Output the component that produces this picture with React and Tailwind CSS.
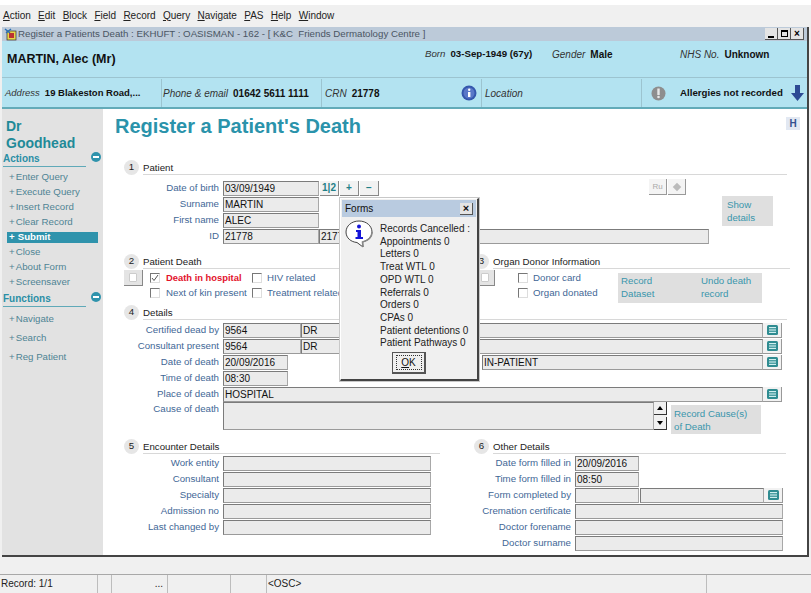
const F = "font-['Liberation_Sans',Arial,sans-serif]";
const menu = ["Action", "Edit", "Block", "Field", "Record", "Query", "Navigate", "PAS", "Help", "Window"];

function Menu() {
  return (
    <div className="h-[22px] pb-[2px] flex items-center pl-[3px] gap-[7.3px] text-[10px] text-[#222]">
      {menu.map((m) => (
        <span key={m}><span className="underline">{m[0]}</span>{m.slice(1)}</span>
      ))}
    </div>
  );
}

function WinBtn({ children }) {
  return (
    <span className="w-[13px] h-[12px] bg-[#e4e4e4] border-r border-b border-[#555] border-t-white border-l-white flex items-center justify-center text-[10px] leading-none text-black font-bold">
      {children}
    </span>
  );
}

function AppIcon() {
  return (
    <svg width="13" height="13" viewBox="0 0 13 13" className="mr-[1px] shrink-0">
      <rect x="3" y="3" width="9" height="9" fill="#e8d44a" stroke="#333" strokeWidth="0.7" />
      <rect x="5" y="5" width="5" height="5" fill="#b33" />
      <path d="M1 1 L6 5 M2 5 L7 1" stroke="#2a6fb5" strokeWidth="1.4" />
    </svg>
  );
}

function Title() {
  return (
    <div className="h-[14px] bg-[#bccad9] flex items-center pl-[2px] pr-[3px] text-[9.7px] text-[#4a5563]">
      <AppIcon />
      <span className="flex-1 whitespace-pre">Register a Patients Death : EKHUFT : OASISMAN - 162 - [ K&amp;C  Friends Dermatology Centre ]</span>
      <span className="flex">
        <WinBtn><span className="mt-[6px] block w-[6px] h-[2px] bg-black" /></WinBtn>
        <WinBtn><span className="block w-[7px] h-[7px] border border-black border-t-2" /></WinBtn>
        <WinBtn>×</WinBtn>
      </span>
    </div>
  );
}

function L({ children }) { return <i className="text-[#333] mr-[5px]">{children}</i>; }
function B({ children }) { return <b className="text-[#111]">{children}</b>; }

function InfoCircle() {
  return (
    <svg width="16" height="16" viewBox="0 0 16 16">
      <circle cx="8" cy="8" r="7.5" fill="#3557ad" />
      <circle cx="8" cy="8" r="5.5" fill="#5a78c8" />
      <rect x="7" y="7" width="2.4" height="5" fill="#fff" />
      <circle cx="8.2" cy="4.8" r="1.2" fill="#fff" />
    </svg>
  );
}
function Warn() {
  return (
    <svg width="15" height="15" viewBox="0 0 15 15">
      <circle cx="7.5" cy="7.5" r="7" fill="#8e8e8e" />
      <rect x="6.3" y="2.5" width="2.4" height="6.5" fill="#e8e8e8" />
      <circle cx="7.5" cy="11" r="1.3" fill="#e8e8e8" />
    </svg>
  );
}
function Arrow() {
  return (
    <svg width="13" height="16" viewBox="0 0 13 16">
      <path d="M4 0 H9 V8 H13 L6.5 16 L0 8 H4 Z" fill="#2d4a94" />
    </svg>
  );
}

function Header() {
  return (
    <div className="bg-[#b3e3f1] text-[10px]">
      <div className="h-[37px] flex border-b border-[#9cc4d0]">
        <div className="w-[423px] pl-[5px] pt-[10px] text-[12.5px] leading-[16px] font-bold text-[#111]">MARTIN, Alec (Mr)</div>
        <div className="w-[127px] pt-[6px] text-[9.7px]"><L>Born</L><B>03-Sep-1949 (67y)</B></div>
        <div className="w-[128px] pt-[6px]"><L>Gender</L><B>Male</B></div>
        <div className="pt-[6px]"><L>NHS No.</L><B>Unknown</B></div>
      </div>
      <div className="h-[31px] pt-[1px] flex items-center border-b-2 border-[#63abb9]">
        <div className="w-[160px] h-full pl-[3px] flex items-center border-r border-[#9cc4d0] text-[9.5px]"><L>Address</L><B>19 Blakeston Road,...</B></div>
        <div className="w-[160px] h-full pl-[1px] flex items-center border-r border-[#9cc4d0]"><L>Phone &amp; email</L><B>01642 5611 1111</B></div>
        <div className="w-[160px] h-full pl-[3px] pr-[4px] flex items-center justify-between border-r border-[#9cc4d0]">
          <span><L>CRN</L><B>21778</B></span>
          <InfoCircle />
        </div>
        <div className="w-[160px] h-full pl-[3px] flex items-center border-r border-[#9cc4d0]"><i className="text-[#333]">Location</i></div>
        <div className="flex-1 h-full flex items-center pl-[9px]">
          <Warn />
          <b className="ml-[14px] text-[9.7px] text-[#111] whitespace-nowrap">Allergies not recorded</b>
          <span className="ml-[8px] flex"><Arrow /></span>
        </div>
      </div>
    </div>
  );
}

function Minus() {
  return (
    <span className="w-[10px] h-[10px] rounded-full bg-[#2f93ac] flex items-center justify-center">
      <span className="w-[6px] h-[2px] bg-white" />
    </span>
  );
}

function SideHead({ children }) {
  return (
    <div className="flex items-start h-[15px]">
      <div className="w-[83px] h-[14px] border-b border-[#5fa9b8] text-[10px] leading-[12px] font-bold text-[#2a8fa6]">{children}</div>
      <span className="ml-[5px] -mt-[1px]"><Minus /></span>
    </div>
  );
}

function Item({ label, sel, h }) {
  return (
    <div className={`${h} flex items-center text-[9.7px]`}>
      {sel ? (
        <div className="ml-[4px] w-[91px] h-[11px] bg-[#2f93ac] flex items-center pl-[2px] text-white font-bold">
          <span className="mr-[3px]">+</span>{label}
        </div>
      ) : (
        <div className="pl-[6px] text-[#4f8494]"><span className="mr-[1px]">+</span>{label}</div>
      )}
    </div>
  );
}

function Sidebar() {
  const actions = ["Enter Query", "Execute Query", "Insert Record", "Clear Record", "Submit", "Close", "About Form", "Screensaver"];
  return (
    <div className="w-[101px] bg-[#e2e2e2] pl-[1px] pt-[9px] shrink-0">
      <div className="pl-[3px] text-[14px] leading-[17px] font-bold text-[#1f8a98] h-[35px]">Dr<br />Goodhead</div>
      <SideHead>Actions</SideHead>
      <div className="mt-[2px]">
        {actions.map((a) => <Item key={a} label={a} sel={a === "Submit"} h="h-[15px]" />)}
      </div>
      <div className="mt-[3px]"><SideHead>Functions</SideHead></div>
      <div className="mt-[2px]">
        {["Navigate", "Search", "Reg Patient"].map((a) => <Item key={a} label={a} h="h-[19px]" />)}
      </div>
    </div>
  );
}

function SecHead({ n, title, w, cls = "" }) {
  return (
    <div className={`flex h-[15px] text-[9.7px] ${cls}`}>
      <span className="w-[15px] h-[15px] rounded-full bg-[#e6e6e6] flex items-center justify-center text-[#222] shrink-0">{n}</span>
      <span className={`ml-[4px] ${w} border-b border-[#d8d8d8] text-[#222] leading-[15px]`}>{title}</span>
    </div>
  );
}

function Field({ w, children, cls = "" }) {
  return (
    <div className={`${w} ${cls} h-[15px] shrink-0 bg-[#ebebeb] border border-[#7b7b7b] border-r-[#a8a8a8] border-b-[#9a9a9a] text-[10px] leading-[13px] pl-[1px] text-[#111] whitespace-nowrap overflow-hidden`}>
      {children}
    </div>
  );
}

function Lbl({ w = "w-[119px]", children }) {
  return <div className={`${w} shrink-0 pr-[4px] text-right text-[9.7px] text-[#3f6796] whitespace-nowrap`}>{children}</div>;
}

function Row({ children, label, lw }) {
  return (
    <div className="h-[16px] flex items-center">
      <Lbl w={lw}>{label}</Lbl>
      {children}
    </div>
  );
}

function ListBtn() {
  return (
    <div className="w-[19px] h-[15px] shrink-0 bg-[#f2f2f2] border-r border-b border-[#999] flex items-center justify-center">
      <svg width="11" height="10" viewBox="0 0 11 10">
        <rect width="11" height="10" rx="1.5" fill="#2f8c91" />
        <rect x="2" y="2" width="7" height="1.2" fill="#cfeeee" />
        <rect x="2" y="4.4" width="7" height="1.2" fill="#cfeeee" />
        <rect x="2" y="6.8" width="7" height="1.2" fill="#cfeeee" />
      </svg>
    </div>
  );
}

function SmallBtn({ children, w = "w-[19px]" }) {
  return (
    <div className={`${w} h-[15px] bg-[#f2f2f2] border-r border-b border-[#888] flex items-center justify-center text-[10px] font-bold text-[#1f7f88]`}>
      {children}
    </div>
  );
}

function Check({ on }) {
  return (
    <span className="w-[10px] h-[10px] shrink-0 border border-t-[#777] border-l-[#777] border-r-[#ddd] border-b-[#ddd] flex items-center justify-center">
      {on && (
        <svg width="8" height="8" viewBox="0 0 8 8"><path d="M1 4 L3 6.5 L7 1" stroke="#555" strokeWidth="1" fill="none" /></svg>
      )}
    </span>
  );
}

function Square({ cls = "" }) {
  return (
    <div className={`w-[19px] h-[16px] bg-[#e4e4e4] border-r border-b border-[#888] flex items-center justify-center shrink-0 ${cls}`}>
      <span className="w-[8px] h-[9px] bg-white border border-[#ccc] rounded-[1px]" />
    </div>
  );
}

function CB({ on, children, cls = "text-[#3f6796] text-[9.7px]", w, gap = "ml-[6px]" }) {
  return (
    <div className={`flex items-center ${w}`}>
      <Check on={on} />
      <span className={`${gap} whitespace-nowrap ${cls}`}>{children}</span>
    </div>
  );
}

function LinkBox({ children, w, cls = "" }) {
  return <div className={`${w} ${cls} bg-[#dfdfdf] text-[9.7px] leading-[13px] text-[#3a96ac]`}>{children}</div>;
}

function Scroll() {
  return (
    <div className="w-[13px] h-[28px] shrink-0 flex flex-col justify-between bg-[#f0f0f0]">
      {["M1 5 L4 1 L7 5 Z", "M1 1 L4 5 L7 1 Z"].map((d) => (
        <span key={d} className="h-[13px] bg-[#f0f0f0] border-r border-b border-[#333] flex items-center justify-center">
          <svg width="8" height="6" viewBox="0 0 8 6"><path d={d} fill="#000" /></svg>
        </span>
      ))}
    </div>
  );
}

function Form() {
  return (
    <div className="flex-1 bg-white pl-[1px] relative">
      <div className="h-[51px] flex items-start justify-between pr-[7px]">
        <h1 className="ml-[11px] mt-[6px] text-[20px] leading-[23px] font-bold text-[#2a93ab]">Register a Patient's Death</h1>
        <span className="mt-[8px] w-[14px] h-[13px] bg-[#e2e8f2] flex items-center justify-center text-[10px] font-bold text-[#33508f]">H</span>
      </div>

      <SecHead n="1" title="Patient" w="w-[644px]" cls="ml-[20px]" />
      <div className="mt-[5px] flex">
        <div className="w-[525px]">
          <Row label="Date of birth">
            <Field w="w-[96px]">03/09/1949</Field>
            <div className="ml-[1px] flex gap-[1px]">
              <SmallBtn>1|2</SmallBtn><SmallBtn>+</SmallBtn><SmallBtn>−</SmallBtn>
            </div>
          </Row>
          <Row label="Surname"><Field w="w-[96px]">MARTIN</Field></Row>
          <Row label="First name"><Field w="w-[96px]">ALEC</Field></Row>
        </div>
        <div className="w-[126px] ml-[20px] -mt-[1px]">
          <div className="flex gap-[1px]">
            <div className="w-[18px] h-[16px] bg-[#f4f4f4] border-r border-b border-[#999] text-[8px] text-[#aaa] flex items-center justify-center">Ru</div>
            <div className="w-[18px] h-[16px] bg-[#f4f4f4] border-r border-b border-[#999] flex items-center justify-center">
              <span className="w-[6px] h-[6px] rotate-45 bg-[#bbb]" />
            </div>
          </div>
          <LinkBox w="w-[51px]" cls="ml-[73px] mt-[1px] h-[30px] pl-[5px] pt-[2px]">Show<br />details</LinkBox>
        </div>
      </div>
      <Row label="ID">
        <Field w="w-[96px]">21778</Field>
        <Field w="w-[390px]">21778</Field>
      </Row>

      <div className="mt-[10px] flex">
        <div className="w-[347px] ml-[20px]">
          <SecHead n="2" title="Patient Death" w="w-[327px]" />
          <div className="mt-[1px] flex">
            <Square />
            <div className="ml-[7px]">
              <div className="h-[16px] flex items-center">
                <CB on w="w-[102px]" cls="text-[#e3122b] font-bold text-[9.4px]">Death in hospital</CB>
                <CB gap="ml-[5px]">HIV related</CB>
              </div>
              <div className="h-[15px] flex items-center">
                <CB w="w-[102px]">Next of kin present</CB>
                <CB gap="ml-[5px]">Treatment related</CB>
              </div>
            </div>
          </div>
        </div>
        <div className="flex-1">
          <SecHead n="3" title="Organ Donor Information" w="w-[297px]" cls="ml-[3px]" />
          <div className="mt-[1px] flex">
            <Square cls="ml-[5px]" />
            <div className="ml-[23px] w-[100px]">
              <div className="h-[16px] flex items-center"><CB gap="ml-[5px]">Donor card</CB></div>
              <div className="h-[15px] flex items-center"><CB gap="ml-[5px]">Organ donated</CB></div>
            </div>
            <LinkBox w="w-[144px]" cls="mt-[3px] h-[30px] flex pt-[1px] pl-[3px]">
              <span className="w-[80px]">Record<br />Dataset</span>
              <span>Undo death<br />record</span>
            </LinkBox>
          </div>
        </div>
      </div>

      <div className="mt-[2px] ml-[20px]">
        <SecHead n="4" title="Details" w="w-[644px]" />
      </div>
      <div className="mt-[2px]">
        <Row label="Certified dead by">
          <Field w="w-[78px]">9564</Field><Field w="w-[462px]">DR</Field><ListBtn />
        </Row>
        <Row label="Consultant present">
          <Field w="w-[78px]">9564</Field><Field w="w-[462px]">DR</Field><ListBtn />
        </Row>
        <Row label="Date of death">
          <Field w="w-[65px]">20/09/2016</Field>
          <Field w="w-[281px]" cls="ml-[194px]">IN-PATIENT</Field><ListBtn />
        </Row>
        <Row label="Time of death"><Field w="w-[65px]">08:30</Field></Row>
        <Row label="Place of death"><Field w="w-[540px]">HOSPITAL</Field><ListBtn /></Row>
        <div className="flex items-start">
          <Lbl>Cause of death</Lbl>
          <div className="w-[431px] h-[28px] bg-[#ebebeb] border border-[#7b7b7b] border-r-[#a8a8a8] border-b-[#9a9a9a]" />
          <Scroll />
          <LinkBox w="w-[90px]" cls="ml-[4px] mt-[3px] h-[29px] pl-[3px] pt-[2px]">Record Cause(s)<br />of Death</LinkBox>
        </div>
      </div>

      <div className="mt-[5px] flex">
        <div className="w-[355px]">
          <div className="ml-[20px]"><SecHead n="5" title="Encounter Details" w="w-[297px]" /></div>
          <div className="mt-[1px]">
            {["Work entity", "Consultant", "Specialty", "Admission no", "Last changed by"].map((l) => (
              <Row key={l} label={l}><Field w="w-[208px]" /></Row>
            ))}
          </div>
        </div>
        <div className="flex-1">
          <SecHead n="6" title="Other Details" w="w-[293px]" cls="ml-[15px]" />
          <div className="mt-[1px]">
            <Row lw="w-[116px]" label="Date form filled in"><Field w="w-[64px]">20/09/2016</Field></Row>
            <Row lw="w-[116px]" label="Time form filled in"><Field w="w-[64px]">08:50</Field></Row>
            <Row lw="w-[116px]" label="Form completed by"><Field w="w-[64px]" /><Field w="w-[124px]" cls="ml-[1px]" /><ListBtn /></Row>
            <Row lw="w-[116px]" label="Cremation certificate"><Field w="w-[208px]" /></Row>
            <Row lw="w-[116px]" label="Doctor forename"><Field w="w-[208px]" /></Row>
            <Row lw="w-[116px]" label="Doctor surname"><Field w="w-[208px]" /></Row>
          </div>
        </div>
      </div>
    </div>
  );
}

function Bubble() {
  return (
    <svg width="28" height="28" viewBox="0 0 28 28" className="shrink-0">
      <path d="M14 1 C6.5 1 1 6 1 12 C1 18 6 22 12 22.5 L18 27 L17.5 22 C23 20.5 27 17 27 12 C27 6 21.5 1 14 1 Z" fill="#fff" stroke="#444" strokeWidth="1" />
      <path d="M18 27 L17.5 22 C23 20.5 27 17 27 12" fill="none" stroke="#888" strokeWidth="1.6" />
      <circle cx="14" cy="6.5" r="2" fill="#1515d8" />
      <path d="M11 10 H16 V17 H18 V19 H10.5 V17 H12.5 V12 H11 Z" fill="#1515d8" />
    </svg>
  );
}

function Dialog() {
  const lines = ["Records Cancelled :", "Appointments 0", "Letters 0", "Treat WTL 0", "OPD WTL 0", "Referrals 0", "Orders 0", "CPAs 0", "Patient detentions 0", "Patient Pathways 0"];
  return (
    <div className="absolute left-[340px] top-[198px] w-[139px] h-[183px] bg-[#f0f0f0] border border-white border-r-2 border-b-2 border-r-[#444] border-b-[#444] shadow-[0_0_0_1px_#c8c8c8] px-[1px] pt-[1px]">
      <div className="h-[17px] bg-[#b9cbe0] flex items-center justify-between pl-[3px] pr-[3px] text-[10px] text-[#111]">
        Forms
        <span className="w-[13px] h-[12px] bg-[#e4e4e4] border-r border-b border-[#555] flex items-center justify-center text-[11px] leading-none font-bold">×</span>
      </div>
      <div className="flex pt-[3px] pl-[3px]">
        <Bubble />
        <div className="ml-[7px] text-[10px] leading-[12.7px] text-[#222] pt-[3px]">
          {lines.map((l) => <div key={l} className="whitespace-nowrap">{l}</div>)}
        </div>
      </div>
      <div className="mt-[2px] flex justify-center">
        <div className="w-[34px] h-[22px] bg-[#efefef] border border-[#555] border-r-2 border-b-2 flex items-center justify-center">
          <span className="border border-dotted border-[#333] w-[26px] h-[15px] text-[10px] leading-[13px] text-center text-[#111]"><span className="underline">O</span>K</span>
        </div>
      </div>
    </div>
  );
}

function Status() {
  const cells = [["w-[98px]", "Record: 1/1"], ["w-[14px]", ""], ["w-[56px]", "..."], ["w-[63px]", ""], ["w-[36px]", ""], ["w-[440px]", "<OSC>"]];
  return (
    <div className="h-[19px] border-t border-[#a8a8a8] flex text-[10px] text-[#222] leading-[17px]">
      {cells.map(([w, t], i) => (
        <div key={i} className={`${w} h-full border-r border-[#bdbdbd] pl-[1px] whitespace-pre ${t === "..." ? "text-right pr-[4px]" : ""}`}>{t}</div>
      ))}
    </div>
  );
}

export default function App() {
  return (
    <div className={`${F} relative w-[811px] h-[593px] overflow-hidden bg-[#f0f0f0] flex flex-col`}>
      <div className="h-[5px] bg-white shrink-0" />
      <Menu />
      <div className="ml-[2px] w-[807px] h-[530px] shrink-0 flex flex-col border-r-2 border-b-2 border-[#444] bg-white">
        <Title />
        <Header />
        <div className="flex-1 flex min-h-0">
          <Sidebar />
          <Form />
        </div>
      </div>
      <div className="h-[17px] shrink-0" />
      <Status />
      <Dialog />
    </div>
  );
}
